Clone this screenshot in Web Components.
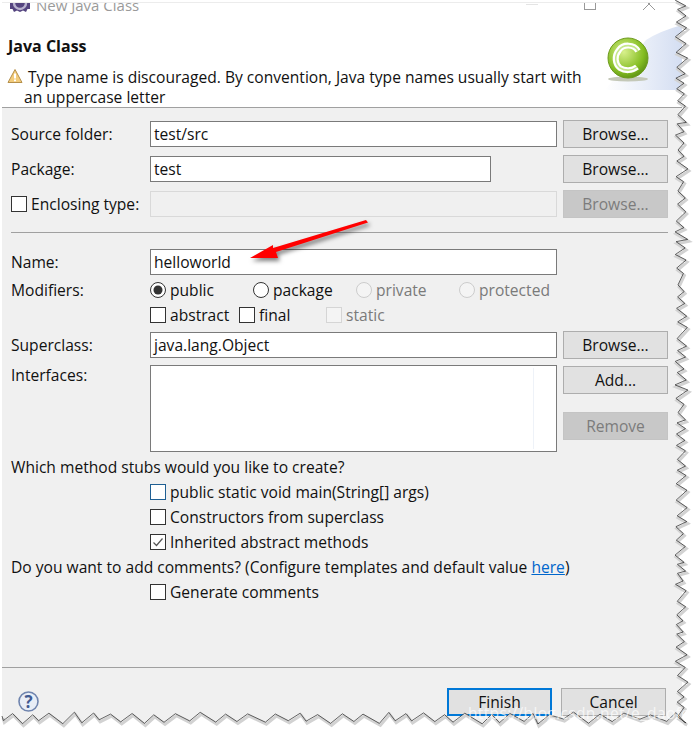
<!DOCTYPE html>
<html>
<head>
<meta charset="utf-8">
<style>
  html, body { margin: 0; background: #fff; }
  body { font: 15.6px/20px "Open Sans", "Noto Sans", sans-serif; color: #111; }
</style>
</head>
<body>
<java-class-dialog></java-class-dialog>

<script>
class ideButton extends HTMLElement {
  connectedCallback() {
    const off = this.hasAttribute('disabled');
    const focus = this.hasAttribute('focused');
    this.attachShadow({ mode: 'open' }).innerHTML = `
      <style>
        :host { display: flex; align-items: center; justify-content: center; box-sizing: border-box;
          width: 105px; height: 28px; background: ${off ? '#c8c8c8' : '#e1e1e1'};
          border: ${focus ? '2px solid #0078d7' : '1px solid ' + (off ? '#c4c4c4' : '#adadad')};
          color: ${off ? '#7c7c7c' : '#111'}; }
      </style><slot></slot>`;
  }
}
customElements.define('ide-button', ideButton);

class ideInput extends HTMLElement {
  connectedCallback() {
    const off = this.hasAttribute('disabled');
    this.attachShadow({ mode: 'open' }).innerHTML = `
      <style>
        :host { display: flex; align-items: center; box-sizing: border-box; height: 26px; padding-left: 3px;
          background: ${off ? '#f0f0f0' : '#fff'}; border: 1px solid ${off ? '#d9d9d9' : '#7a7a7a'}; }
      </style><slot></slot>`;
  }
}
customElements.define('ide-input', ideInput);

class ideCheck extends HTMLElement {
  connectedCallback() {
    const off = this.hasAttribute('disabled');
    const mark = this.hasAttribute('checked')
      ? '<svg width="14" height="14" viewBox="0 0 14 14"><path d="M2.5 7.5 5.5 10.5 11.5 3.5" fill="none" stroke="#555" stroke-width="1.2"/></svg>' : '';
    const border = off ? '#d5d5d5' : (this.hasAttribute('hot') ? '#1f5f93' : '#333');
    this.attachShadow({ mode: 'open' }).innerHTML = `
      <style>
        :host { display: inline-flex; align-items: center; gap: 4px; color: ${off ? '#7a7a7a' : 'inherit'}; }
        .box { box-sizing: border-box; width: 16px; height: 16px; background: ${off ? '#f4f4f4' : '#fff'}; border: 1px solid ${border}; display: flex; align-items: center; justify-content: center; }
      </style><span class="box">${mark}</span><slot></slot>`;
  }
}
customElements.define('ide-check', ideCheck);

class ideRadio extends HTMLElement {
  connectedCallback() {
    const off = this.hasAttribute('disabled');
    const on = this.hasAttribute('checked');
    this.attachShadow({ mode: 'open' }).innerHTML = `
      <style>
        :host { display: inline-flex; align-items: center; gap: 4px; color: ${off ? '#7a7a7a' : 'inherit'}; }
        svg { display: block; }
      </style>
      <svg width="16" height="16" viewBox="0 0 16 16">
        <circle cx="8" cy="8" r="7.5" fill="${off ? '#f4f4f4' : '#fff'}" stroke="${off ? '#ccc' : '#333'}"/>
        ${on ? '<circle cx="8" cy="8" r="4.5" fill="#333"/>' : ''}
      </svg><slot></slot>`;
  }
}
customElements.define('ide-radio', ideRadio);

class ideHeader extends HTMLElement {
  connectedCallback() {
    this.attachShadow({ mode: 'open' }).innerHTML = `
      <style>
        :host { display: block; box-sizing: border-box; height: 105px; background: #fff; border-bottom: 1px solid #a0a0a0; position: relative; overflow: hidden; }
        .bar { display: flex; align-items: center; gap: 6px; height: 20px; margin-top: -8px; padding-left: 8px; color: #9a9a9a; font-size: 15px; }
        .heading { font-weight: 700; margin: 21px 0 0 6px; color: #111; font-size: 16px; }
        .msg { display: grid; grid-template-columns: 20px 1fr; margin: 11px 0 0 5px; width: 590px; }
        .msg svg { margin-top: 1px; }
        .msg div { padding-left: 1px; }
        .msg .two { grid-column: 1 / 3; padding-left: 17px; }
        .winbtn { position: absolute; }
        .art { position: absolute; right: 0; top: 22px; }
      </style>
      <div class="bar">
        <svg width="20" height="16" viewBox="0 0 20 16"><path d="M0 0H20V12H17.5L16 15 13 13.5 10 15 7 13.5 4 15 2.5 12H0Z" fill="#54447f"/><circle cx="10" cy="6" r="6" fill="none" stroke="#b9b3cf" stroke-width="2.4"/></svg>
        <span>New Java Class</span>
      </div>
      <div class="heading">Java Class</div>
      <div class="msg">
        <svg width="16" height="16" viewBox="0 0 16 16"><path d="M8 1.5 15 14.5H1Z" fill="#f3cc7c" stroke="#b58f4a" stroke-linejoin="round"/><path d="M8 5.5V10.5M8 11.5V13.2" stroke="#fff" stroke-width="2"/></svg>
        <div>Type name is discouraged. By convention, Java type names usually start with</div>
        <div class="two">an uppercase letter</div>
      </div>
      <svg class="winbtn" style="left:524px;top:0" width="12" height="3"><path d="M0 1.5H12" stroke="#e4e4e4"/></svg>
      <svg class="winbtn" style="left:582px;top:-5px" width="12" height="12"><rect x=".5" y=".5" width="11" height="11" fill="none" stroke="#999"/></svg>
      <svg class="winbtn" style="left:640px;top:-6px" width="14" height="14"><path d="M1 1 13 13M13 1 1 13" stroke="#999"/></svg>
      <svg class="art" width="86" height="68" viewBox="0 0 86 68">
        <defs>
          <linearGradient id="sky" x1="0" x2="1"><stop offset="0" stop-color="#fff"/><stop offset="1" stop-color="#d4def2"/></linearGradient>
          <radialGradient id="ball" cx=".4" cy=".35" r=".7"><stop offset="0" stop-color="#d8f08c"/><stop offset=".7" stop-color="#84bd22"/><stop offset="1" stop-color="#5b8f14"/></radialGradient>
        </defs>
        <path d="M9 65 50 15Q64 6 86 0V65Z" fill="url(#sky)"/>
        <ellipse cx="32" cy="54" rx="20" ry="2.5" fill="#c4c8b8"/>
        <circle cx="32" cy="33" r="20" fill="url(#ball)" stroke="#6d9a1d"/>
        <path d="M42 26C38 19 27 19 23 25 18 31 19 39 24 43 29 46 36 46 41 42" fill="none" stroke="#fff" stroke-width="6"/>
        <path d="M42 26C38 19 27 19 23 25 18 31 19 39 24 43 29 46 36 46 41 42" fill="none" stroke="#c5e68a" stroke-width="1.6"/>
      </svg>`;
  }
}
customElements.define('ide-header', ideHeader);

class redArrow extends HTMLElement {
  connectedCallback() {
    this.attachShadow({ mode: 'open' }).innerHTML = `
      <style>
        :host { display: block; position: absolute; left: 240px; top: 210px; width: 140px; height: 60px; pointer-events: none; }
        svg { overflow: visible; filter: drop-shadow(2px 3px 2px rgba(0,0,0,.5)); }
      </style>
      <svg width="140" height="60" viewBox="240 210 140 60">
        <path d="M366 220 368 222.5 276 252 278 258 250 258 273 245 273 248Z" fill="#f00"/>
      </svg>`;
  }
}
customElements.define('red-arrow', redArrow);

class tornEdge extends HTMLElement {
  connectedCallback() {
    // seeded so the tear comes out the same on every load
    let seed = 11;
    const rnd = () => { seed = (seed * 16807) % 2147483647; return seed / 2147483647; };
    let pts = [];
    for (let y = 0; y < 722; y += 9 + rnd() * 8) {
      pts.push([675 + rnd() * 3, y]);
      pts.push([688 - rnd() * 5, y + 5 + rnd() * 3]);
    }
    pts.push([684, 722]);
    for (let x = 676; x > 0; x -= 16 + rnd() * 12) {
      pts.push([x, 712 + rnd() * 3]);
      pts.push([x - 9 - rnd() * 3, 724 - rnd() * 5]);
    }
    pts.push([2, 716]);
    const line = pts.map((p) => p[0].toFixed(1) + ' ' + p[1].toFixed(1)).join(' L');
    this.attachShadow({ mode: 'open' }).innerHTML = `
      <style>
        :host { display: block; position: absolute; left: 0; top: 0; width: 697px; height: 733px; pointer-events: none; }
      </style>
      <svg width="697" height="733">
        <path d="M${line} L2 733 L697 733 L697 0Z" fill="#fff"/>
        <path d="M${line}" fill="none" stroke="#d2d2d2" stroke-width="3" transform="translate(1 2)"/>
        <path d="M${line}" fill="none" stroke="#222" stroke-width=".7"/>
      </svg>`;
  }
}
customElements.define('torn-edge', tornEdge);

class javaClassDialog extends HTMLElement {
  connectedCallback() {
    this.attachShadow({ mode: 'open' }).innerHTML = `
      <style>
        :host { display: block; position: relative; width: 697px; height: 733px; overflow: hidden; padding-top: 2px; box-sizing: border-box; }
        .win { margin: 0 0 0 2px; width: 680px; height: 731px; background: #f0f0f0; border-top: 1px solid #ececec; box-sizing: border-box; }
        .form { display: grid; grid-template-columns: 133px 407px 105px; column-gap: 6px; padding: 12px 0 0 9px; }
        .form > * { align-self: center; }
        .rule { grid-column: 1 / 4; height: 1px; background: #a0a0a0; width: 657px; margin: 14px 0 16px; }
        .opts { display: flex; margin-top: 5px; }
        .full { grid-column: 1 / 4; }
        .wide { grid-column: 2 / 4; margin-top: 5px; height: 20px; }
        a { color: #0066cc; text-decoration: underline; }
        .list { box-sizing: border-box; background: #fff; border: 1px solid #7a7a7a; height: 87px; align-self: start; position: relative; margin-top: 6px; }
        .list i { position: absolute; right: 22px; top: 2px; bottom: 2px; width: 1px; background: #eef2f8; }
        .stack { display: flex; flex-direction: column; align-self: start; margin-top: 7px; }
        .foot { border-top: 1px solid #a0a0a0; margin-top: 65px; display: flex; align-items: flex-start; padding: 20px 0 0 16px; }
        .foot svg { margin: 3px 408px 0 0; }
        .foot ide-button + ide-button { margin-left: 9px; }
        .watermark { position: absolute; left: 468px; top: 703px; color: rgba(255,255,255,.7); font-size: 15.6px; letter-spacing: .3px; white-space: nowrap; }
      </style>
      <div class="win">
        <ide-header></ide-header>
        <div class="form">
          <span>Source folder:</span><ide-input>test/src</ide-input><ide-button>Browse...</ide-button>
          <span style="margin-top:7px">Package:</span>
          <ide-input style="margin-top:7px;width:341px">test</ide-input><ide-button style="margin-top:7px">Browse...</ide-button>
          <ide-check style="margin-top:7px">Enclosing type:</ide-check>
          <ide-input disabled style="margin-top:7px"></ide-input><ide-button disabled style="margin-top:7px">Browse...</ide-button>
          <div class="rule"></div>
          <span>Name:</span><ide-input>helloworld</ide-input><span></span>
          <span style="margin-top:5px">Modifiers:</span>
          <div class="opts wide">
            <ide-radio checked style="width:103px">public</ide-radio>
            <ide-radio style="width:103px">package</ide-radio>
            <ide-radio disabled style="width:103px">private</ide-radio>
            <ide-radio disabled>protected</ide-radio>
          </div>
          <span></span>
          <div class="opts wide">
            <ide-check style="width:89px">abstract</ide-check>
            <ide-check style="width:87px">final</ide-check>
            <ide-check disabled>static</ide-check>
          </div>
          <span style="margin-top:6px">Superclass:</span>
          <ide-input style="margin-top:6px">java.lang.Object</ide-input><ide-button style="margin-top:6px">Browse...</ide-button>
          <span style="margin-top:6px;align-self:start">Interfaces:</span>
          <div class="list"><i></i></div>
          <div class="stack">
            <ide-button>Add...</ide-button>
            <ide-button disabled style="margin-top:18px">Remove</ide-button>
          </div>
          <span class="full" style="margin-top:5px">Which method stubs would you like to create?</span>
          <span></span><ide-check class="wide" hot>public static void main(String[] args)</ide-check>
          <span></span><ide-check class="wide">Constructors from superclass</ide-check>
          <span></span><ide-check class="wide" checked>Inherited abstract methods</ide-check>
          <span class="full" style="margin-top:5px">Do you want to add comments? (Configure templates and default value <a>here</a>)</span>
          <span></span><ide-check class="wide">Generate comments</ide-check>
        </div>
        <div class="foot">
          <svg width="21" height="21" viewBox="0 0 21 21"><circle cx="10.5" cy="10.5" r="9.5" fill="#e8edf6" stroke="#6f84ae" stroke-width="1.6"/><text x="10.5" y="16.5" text-anchor="middle" font-size="17" font-weight="700" fill="#3f5a92">?</text></svg>
          <ide-button focused>Finish</ide-button><ide-button>Cancel</ide-button>
        </div>
      </div>
      <red-arrow></red-arrow>
      <torn-edge></torn-edge>
      <div class="watermark">https://blog.csdn.net/e_daofeng</div>`;
  }
}
customElements.define('java-class-dialog', javaClassDialog);
</script>
</body>
</html>
